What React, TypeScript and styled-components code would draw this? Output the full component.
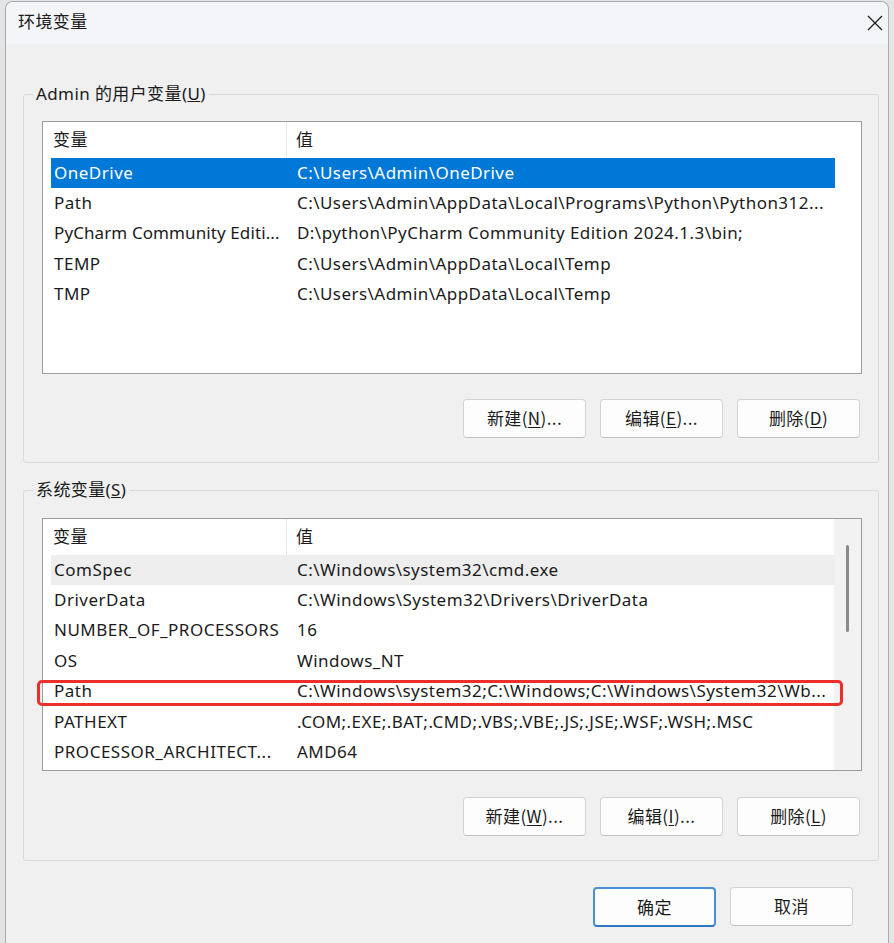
import React from "react";
import styled, { createGlobalStyle } from "styled-components";

const GlobalStyle = createGlobalStyle`
  html, body {
    margin: 0;
    padding: 0;
    background: #e3e4e6;
    font-family: "Noto Sans", "Noto Sans CJK SC", sans-serif;
    color: #1b1b1b;
  }
  * { box-sizing: border-box; }
`;

const Dialog = styled.div`
  margin: 1px 0 0 5px;
  width: 884px;
  height: 942px;
  background: #f0f0f0;
  border: 1px solid #a9a9a9;
  border-bottom: none;
  border-radius: 8px 8px 0 0;
  overflow: hidden;
  display: flex;
  flex-direction: column;
`;

const TitleBar = styled.div`
  height: 42px;
  flex: none;
  background: #f4f5f8;
  display: flex;
  align-items: center;
  justify-content: space-between;
  padding-left: 12px;
`;

const Title = styled.div`
  font-size: 17px;
  line-height: 22px;
  letter-spacing: 0.4px;
  font-family: "Noto Sans CJK SC", "Noto Sans", sans-serif;
  margin-top: -5px;
`;

const CloseButton = styled.div`
  width: 26px;
  height: 42px;
  display: flex;
  align-items: center;
  justify-content: center;
  margin-top: -1px;
`;

const Content = styled.div`
  padding: 0 9px 0 17px;
  display: flex;
  flex-direction: column;
`;

const Group = styled.fieldset<{ $top: number; $pad: number }>`
  margin: ${(p) => p.$top}px 0 0 0;
  border: 1px solid #dadada;
  border-radius: 3px;
  padding: ${(p) => p.$pad}px 16px 24px 18px;
  min-width: 0;
`;

const Legend = styled.legend`
  font-size: 17px;
  line-height: 22px;
  letter-spacing: 0.4px;
  padding: 0 3px;
  margin-left: -9px;
  color: #1b1b1b;
`;

const ListBox = styled.div`
  height: 253px;
  width: 820px;
  background: #ffffff;
  border: 1px solid #9c9c9c;
  display: flex;
`;

const ListMain = styled.div`
  flex: 1;
  min-width: 0;
  display: flex;
  flex-direction: column;
`;

const Header = styled.div`
  height: 36px;
  display: flex;
  align-items: center;
  flex: none;
`;

const HeaderCell = styled.div<{ $w?: number }>`
  ${(p) => (p.$w ? `width: ${p.$w}px; border-right: 1px solid #e6e6e6;` : "flex: 1;")}
  height: 36px;
  display: flex;
  align-items: center;
  padding-left: ${(p) => (p.$w ? 10 : 9)}px;
  padding-bottom: 3px;
  font-size: 17px;
  letter-spacing: 0.4px;
  font-family: "Noto Sans CJK SC", "Noto Sans", sans-serif;
`;

const Rows = styled.div`
  padding-left: 8px;
  display: flex;
  flex-direction: column;
`;

const Row = styled.div<{ $state?: "selected" | "hover" }>`
  position: relative;
  width: 784px;
  height: 30.4px;
  display: flex;
  align-items: center;
  padding-bottom: 2px;
  font-size: 17px;
  letter-spacing: 0.45px;
  white-space: nowrap;
  background: ${(p) =>
    p.$state === "selected" ? "#0078d7" : p.$state === "hover" ? "#eeeeee" : "transparent"};
  color: ${(p) => (p.$state === "selected" ? "#ffffff" : "#1b1b1b")};
`;

const NameCell = styled.div<{ $tight?: boolean }>`
  width: 236px;
  padding-left: 3px;
  overflow: hidden;
  letter-spacing: ${(p) => (p.$tight ? "0.1px" : "0.5px")};
`;

const ValueCell = styled.div`
  flex: 1;
  padding-left: 10px;
  overflow: hidden;
`;

const Highlight = styled.div`
  position: absolute;
  left: -14px;
  right: -8px;
  top: 3px;
  bottom: 1px;
  border: 3px solid #ec2f2a;
  border-radius: 5px;
  pointer-events: none;
`;

const ScrollTrack = styled.div`
  width: 27px;
  flex: none;
  background: #f2f2f2;
  display: flex;
  justify-content: center;
  padding-top: 26px;
`;

const ScrollThumb = styled.div`
  width: 3px;
  height: 87px;
  border-radius: 2px;
  background: #8a8a8a;
`;

const ButtonRow = styled.div<{ $top: number; $right: number }>`
  display: flex;
  justify-content: flex-end;
  gap: 14px;
  margin-top: ${(p) => p.$top}px;
  padding-right: ${(p) => p.$right}px;
`;

const Button = styled.div<{ $primary?: boolean }>`
  width: 123px;
  height: ${(p) => (p.$primary ? 40 : 39)}px;
  border-radius: 4px;
  background: #fdfdfd;
  border: ${(p) => (p.$primary ? "2px solid #4a8ed6" : "1px solid #d3d3d3")};
  border-bottom-color: ${(p) => (p.$primary ? "#2f78c8" : "#c2c2c2")};
  display: flex;
  align-items: center;
  justify-content: center;
  padding-bottom: 2px;
  font-size: 17px;
  letter-spacing: 0.4px;
  font-family: "Noto Sans CJK SC", "Noto Sans", sans-serif;
  color: #1b1b1b;
  u { text-decoration-thickness: 1px; text-underline-offset: 2px; }
`;

type Item = {
  name: string;
  value: string;
  state?: "selected" | "hover";
  marked?: boolean;
  tight?: boolean;
};

const userVars: Item[] = [
  { name: "OneDrive", value: "C:\\Users\\Admin\\OneDrive", state: "selected" },
  { name: "Path", value: "C:\\Users\\Admin\\AppData\\Local\\Programs\\Python\\Python312..." },
  {
    name: "PyCharm Community Editi...",
    value: "D:\\python\\PyCharm Community Edition 2024.1.3\\bin;",
    tight: true,
  },
  { name: "TEMP", value: "C:\\Users\\Admin\\AppData\\Local\\Temp" },
  { name: "TMP", value: "C:\\Users\\Admin\\AppData\\Local\\Temp" },
];

const sysVars: Item[] = [
  { name: "ComSpec", value: "C:\\Windows\\system32\\cmd.exe", state: "hover" },
  { name: "DriverData", value: "C:\\Windows\\System32\\Drivers\\DriverData" },
  { name: "NUMBER_OF_PROCESSORS", value: "16" },
  { name: "OS", value: "Windows_NT" },
  { name: "Path", value: "C:\\Windows\\system32;C:\\Windows;C:\\Windows\\System32\\Wb...", marked: true },
  { name: "PATHEXT", value: ".COM;.EXE;.BAT;.CMD;.VBS;.VBE;.JS;.JSE;.WSF;.WSH;.MSC" },
  { name: "PROCESSOR_ARCHITECT...", value: "AMD64" },
];

const VarList: React.FC<{ items: Item[]; scroll?: boolean }> = ({ items, scroll }) => (
  <ListBox>
    <ListMain>
      <Header>
        <HeaderCell $w={244}>变量</HeaderCell>
        <HeaderCell>值</HeaderCell>
      </Header>
      <Rows>
        {items.map((it) => (
          <Row key={it.name + it.value} $state={it.state}>
            <NameCell $tight={it.tight}>{it.name}</NameCell>
            <ValueCell>{it.value}</ValueCell>
            {it.marked && <Highlight />}
          </Row>
        ))}
      </Rows>
    </ListMain>
    {scroll && (
      <ScrollTrack>
        <ScrollThumb />
      </ScrollTrack>
    )}
  </ListBox>
);

export default function App() {
  return (
    <>
      <GlobalStyle />
      <Dialog>
        <TitleBar>
          <Title>环境变量</Title>
          <CloseButton>
            <svg width="16" height="16" viewBox="0 0 16 16">
              <path d="M1 1 L15 15 M15 1 L1 15" stroke="#1f1f1f" strokeWidth="1.3" fill="none" />
            </svg>
          </CloseButton>
        </TitleBar>
        <Content>
          <Group $top={39} $pad={16}>
            <Legend>
              Admin 的用户变量(<u>U</u>)
            </Legend>
            <VarList items={userVars} />
            <ButtonRow $top={25} $right={2}>
              <Button>
                新建(<u>N</u>)...
              </Button>
              <Button>
                编辑(<u>E</u>)...
              </Button>
              <Button>
                删除(<u>D</u>)
              </Button>
            </ButtonRow>
          </Group>
          <Group $top={16} $pad={17}>
            <Legend>
              系统变量(<u>S</u>)
            </Legend>
            <VarList items={sysVars} scroll />
            <ButtonRow $top={26} $right={2}>
              <Button>
                新建(<u>W</u>)...
              </Button>
              <Button>
                编辑(<u>I</u>)...
              </Button>
              <Button>
                删除(<u>L</u>)
              </Button>
            </ButtonRow>
          </Group>
          <ButtonRow $top={26} $right={26}>
            <Button $primary>确定</Button>
            <Button>取消</Button>
          </ButtonRow>
        </Content>
      </Dialog>
    </>
  );
}
